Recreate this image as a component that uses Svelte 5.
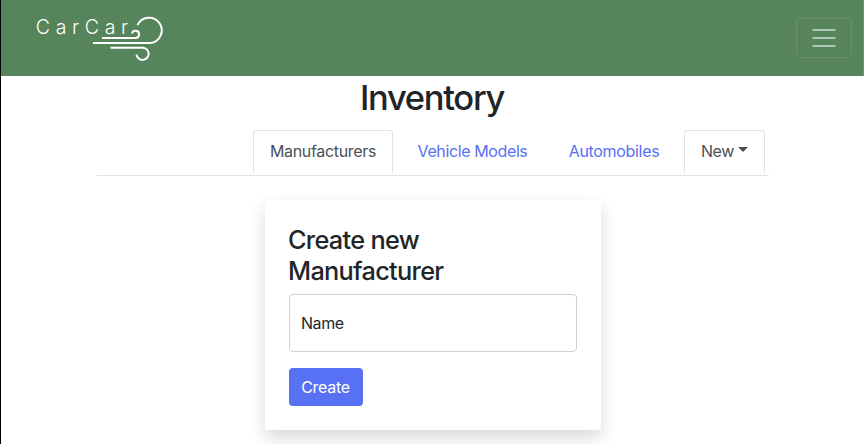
<script>
  const tabs = [
    { label: 'Manufacturers', kind: 'manufacturers', active: true },
    { label: 'Vehicle Models', kind: 'models', active: false },
    { label: 'Automobiles', kind: 'automobiles', active: false }
  ];
</script>

<div class="page">
  <nav>
    <a class="brand" href="#home" aria-label="CarCar">
      <svg width="134" height="56" viewBox="0 0 134 56" fill="none" stroke="#fff" stroke-width="2">
        <text x="3.800" y="26.600" fill="#fff" stroke="none">CarCar</text>
        <path d="M61 36H118.300A12.700 12.700 0 1 0 105.500 18" />
        <path d="M70 31H103.500A3.600 3.600 0 1 0 100 26.500" />
        <path d="M78.500 40.700H111A6.100 6.100 0 1 1 104.500 47.500" />
      </svg>
    </a>
    <button class="toggler" aria-label="Toggle navigation">
      <svg width="30" height="30" viewBox="0 0 30 30" stroke="#fff" stroke-opacity=".55" stroke-width="2" stroke-linecap="butt">
        <path d="M3.500 7h23M3.500 15h23M3.500 23h23" />
      </svg>
    </button>
  </nav>

  <main>
    <h1><span>Inventory</span></h1>
    <div class="tabs">
      {#each tabs as tab}
        <a href="#{tab.kind}" class="tab {tab.kind}" class:active={tab.active}><span>{tab.label}</span></a>
      {/each}
      <a href="#new" class="tab new active"><span>New</span><i></i></a>
    </div>
    <section class="card">
      <h2>Create new<br />Manufacturer</h2>
      <div class="field">Name</div>
      <button class="create">Create</button>
    </section>
  </main>
</div>

<style>
  :global(body) { margin: 0; background: #fff; overflow: hidden; }
  .page {
    box-sizing: border-box;
    height: 444px;
    overflow: hidden;
    border-left: 1px solid #000;
    font: 400 16px/24px Inter, "Liberation Sans", sans-serif;
    color: #212529;
  }
  nav {
    box-sizing: border-box;
    height: 76px;
    padding: 0 12px 0 31px;
    display: flex;
    align-items: center;
    justify-content: space-between;
    background: #56845b;
    border-right: 1px solid #719676;
  }
  .brand { display: flex; height: 62px; }
  .brand text { font: 300 19.500px Inter, sans-serif; letter-spacing: 5.700px; }
  .toggler {
    display: flex;
    align-items: center;
    justify-content: center;
    width: 56px;
    height: 40px;
    margin-right: -1px;
    padding: 0;
    border: 1px solid rgba(255, 255, 255, .1);
    border-radius: 4px;
    background: none;
  }
  main { width: 672px; margin-left: 96px; }
  h1 {
    margin: 0;
    height: 54px;
    font-size: 34.500px;
    line-height: 43px;
    font-weight: 550;
    text-align: center;
    letter-spacing: -1.300px;
  }
  h1 span { margin-right: 2px; }
  .tabs {
    box-sizing: border-box;
    display: flex;
    justify-content: flex-end;
    height: 46px;
    padding-right: 4px;
    border-bottom: 1px solid #dee2e6;
  }
  .tab {
    box-sizing: border-box;
    display: flex;
    align-items: center;
    justify-content: center;
    height: 42px;
    padding-bottom: 2px;
    border: 1px solid transparent;
    border-bottom: 0;
    border-radius: 4px 4px 0 0;
    color: #5770f4;
    text-decoration: none;
    white-space: nowrap;
    letter-spacing: -.320px;
  }
  .tab.active { color: #495057; border-color: #dee2e6; }
  .manufacturers { width: 140px; margin-right: 8px; }
  .models { width: 143px; margin-right: 8px; letter-spacing: -.380px; }
  .automobiles { width: 124px; margin-right: 8px; }
  .new { width: 81px; }
  .new i {
    margin: -2px 0 0 4px;
    border: 5px solid transparent;
    border-top-color: #495057;
    border-bottom: 0;
  }
  .card {
    box-sizing: border-box;
    width: 336px;
    height: 230px;
    margin: 24px auto 0;
    padding: 24px;
    background: #fff;
    box-shadow: 0 8px 16px rgba(0, 0, 0, .15);
  }
  h2 {
    margin: 0 0 8px -1px;
    font-size: 25.300px;
    line-height: 31px;
    font-weight: 550;
    letter-spacing: -.700px;
  }
  .field {
    box-sizing: border-box;
    height: 58px;
    padding: 16px 11px;
    border: 1px solid #ced0d8;
    border-radius: 4px;
    letter-spacing: -.450px;
  }
  .create {
    display: block;
    width: 74px;
    height: 38px;
    margin-top: 16px;
    padding: 0 1px 0 0;
    border: 0;
    border-radius: 4px;
    background: #5770f4;
    color: #fff;
    font: inherit;
    letter-spacing: -.300px;
  }
</style>
